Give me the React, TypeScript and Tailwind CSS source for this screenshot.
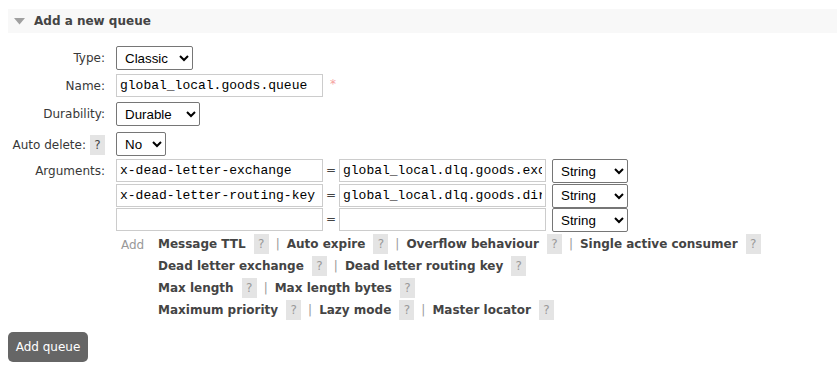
import React from "react";

const verdana = { fontFamily: '"DejaVu Sans", Verdana, sans-serif' };

function Help({ dark = false }: { dark?: boolean }) {
  return (
    <span
      className={`inline-flex h-[20px] w-[15px] items-center justify-center bg-[#e4e4e4] text-[12px] ${
        dark ? "text-[#444]" : "text-[#999]"
      }`}
    >
      ?
    </span>
  );
}

function Sep() {
  return <span className="mx-[7px] text-[#999]">|</span>;
}

function Opt({ label, last }: { label: string; last?: boolean }) {
  return (
    <>
      <span className="mr-[8px] font-bold text-[#444]">{label}</span>
      <Help />
      {!last && <Sep />}
    </>
  );
}

const selectCls =
  "h-[24px] rounded-[2px] border border-[#767676] bg-white pl-[4px] text-[13.33px] text-black";
const inputCls =
  "h-[23px] w-[207px] border border-[#cccccc] px-[3px] text-[13px] text-black outline-none";

function Row({
  label,
  children,
  extra,
  className = "",
}: {
  label: React.ReactNode;
  children: React.ReactNode;
  extra?: string;
  className?: string;
}) {
  return (
    <div className={`flex items-start ${className}`}>
      <div className={`flex w-[105px] shrink-0 items-center justify-end ${extra ?? ""}`}>{label}</div>
      <div className="ml-[11px]">{children}</div>
    </div>
  );
}

export default function App() {
  const mono = { fontFamily: '"Liberation Mono", "Courier New", monospace' };
  const sans = { fontFamily: '"Liberation Sans", Arial, sans-serif' };
  const args = [
    ["x-dead-letter-exchange", "global_local.dlq.goods.exchange"],
    ["x-dead-letter-routing-key", "global_local.dlq.goods.direct"],
    ["", ""],
  ];
  return (
    <div className="min-h-[371px] w-[839px] bg-white text-[12px] text-[#383838]" style={verdana}>
      <div className="pt-[9px] pl-[8px] pr-[2px]">
        <div className="flex h-[24px] items-center bg-[#f8f8f8] pl-[6px]">
          <svg width="11" height="7" viewBox="0 0 11 7" className="mr-[9px]">
            <path d="M0 0 H11 L5.5 6.5 Z" fill="#a0a0a0" />
          </svg>
          <span className="text-[12px] font-bold text-[#444]">Add a new queue</span>
        </div>
      </div>

      <div className="mt-[13px] flex flex-col">
        <Row label="Type:" extra="h-[24px]">
          <select className={`${selectCls} w-[77px]`} style={sans} defaultValue="Classic">
            <option>Classic</option>
          </select>
        </Row>
        <Row label="Name:" extra="h-[23px]" className="mt-[4px]">
          <div className="flex items-start">
            <input className={inputCls} style={mono} defaultValue="global_local.goods.queue" />
            <span className="ml-[7px] mt-[1px] text-[12px] text-[#f5a0a0]">*</span>
          </div>
        </Row>
        <Row label="Durability:" extra="h-[24px]" className="mt-[5px]">
          <select className={`${selectCls} w-[84px]`} style={sans} defaultValue="Durable">
            <option>Durable</option>
          </select>
        </Row>
        <Row
          label={
            <span className="flex items-center gap-[4px]">
              Auto delete: <Help dark />
            </span>
          }
          extra="h-[24px] pt-[2px]"
          className="mt-[6px]"
        >
          <select className={`${selectCls} w-[50px]`} style={sans} defaultValue="No">
            <option>No</option>
          </select>
        </Row>
        <Row label="Arguments:" extra="h-[23px]" className="mt-[3px]">
          <div className="flex flex-col">
            {args.map(([k, v], i) => (
              <div key={i} className="flex h-[24.5px] items-start">
                <input className={inputCls} style={mono} defaultValue={k} />
                <span className="w-[16px] text-center leading-[22px] text-[#444]">=</span>
                <input className={inputCls} style={mono} defaultValue={v} />
                <select className={`${selectCls} ml-[6px] w-[76px]`} style={sans} defaultValue="String">
                  <option>String</option>
                  <option>Number</option>
                  <option>Boolean</option>
                  <option>List</option>
                </select>
              </div>
            ))}
          </div>
          <div className="mt-[1px] flex">
            <span className="ml-[5px] w-[37px] leading-[22px] text-[#999]">Add</span>
            <div className="flex flex-col gap-[2px] leading-[20px]">
              <div className="flex items-center">
                <Opt label="Message TTL" />
                <Opt label="Auto expire" />
                <Opt label="Overflow behaviour" />
                <Opt label="Single active consumer" last />
              </div>
              <div className="flex items-center">
                <Opt label="Dead letter exchange" />
                <Opt label="Dead letter routing key" last />
              </div>
              <div className="flex items-center">
                <Opt label="Max length" />
                <Opt label="Max length bytes" last />
              </div>
              <div className="flex items-center">
                <Opt label="Maximum priority" />
                <Opt label="Lazy mode" />
                <Opt label="Master locator" last />
              </div>
            </div>
          </div>
        </Row>
      </div>

      <div className="mt-[12px] pl-[8px]">
        <button className="h-[30px] w-[80px] rounded-[5px] bg-[#666] text-[12px] text-white">
          Add queue
        </button>
      </div>
    </div>
  );
}
